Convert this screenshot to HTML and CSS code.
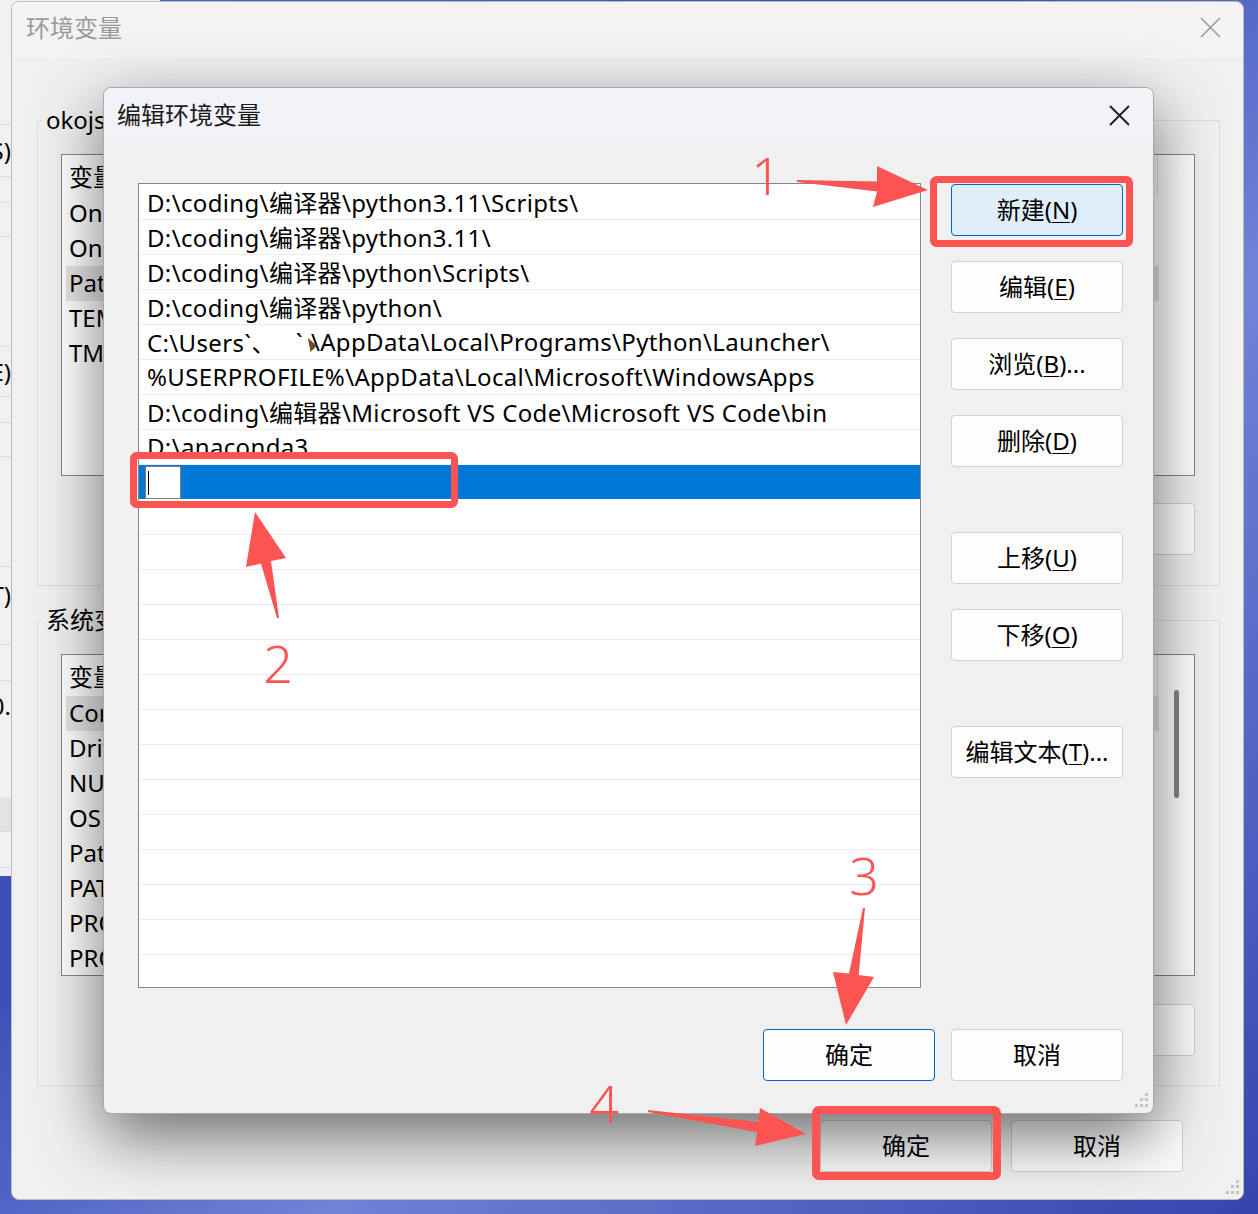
FILE: index.html
```html
<!DOCTYPE html>
<html lang="zh-CN">
<head>
    <meta charset="UTF-8">
    <meta name="viewport" content="width=device-width, initial-scale=1.0">
    <title>编辑环境变量</title>
    <link rel="stylesheet" href="styles.css">
</head>
<body>
    <!-- window behind, only a sliver on the left is visible -->
    <div class="back-win">
        <div class="back-row h125"></div>
        <div class="back-row h52">用户变量(S)</div>
        <div class="back-row h26"></div>
        <div class="back-row h34"></div>
        <div class="back-row h110"></div>
        <div class="back-row h50">高级(E)</div>
        <div class="back-row h26"></div>
        <div class="back-row h34"></div>
        <div class="back-row h110"></div>
        <div class="back-row h56 no-line">环境变量(T)</div>
        <div class="back-row h22"></div>
        <div class="back-row h36"></div>
        <div class="back-row h50 no-line">10.</div>
        <div class="back-row h68"></div>
        <div class="back-row h33 band"></div>
        <div class="back-row h36"></div>
    </div>

    <!-- 环境变量 window -->
    <div class="win win-outer">
        <div class="titlebar">
            <span>环境变量</span>
            <svg class="close-x" width="21" height="21" viewBox="0 0 21 21"><path d="M1 1L20 20M20 1L1 20" stroke="#9a9a9a" stroke-width="1.6"/></svg>
        </div>
        <div class="outer-body">
            <div class="group">
                <div class="group-label">okojs 的用户变量(<u>U</u>)</div>
                <div class="olist">
                    <div class="olist-main">
                        <div class="ohead"><span class="ocol1">变量</span><span class="ocol2">值</span></div>
                        <div class="orow">OneDrive</div>
                        <div class="orow">OneDriveConsumer</div>
                        <div class="orow sel">Path</div>
                        <div class="orow">TEMP</div>
                        <div class="orow">TMP</div>
                    </div>
                </div>
                <div class="obtns">
                    <button class="btn">新建(<u>N</u>)...</button>
                    <button class="btn">编辑(<u>E</u>)...</button>
                    <button class="btn">删除(<u>D</u>)</button>
                </div>
            </div>

            <div class="group group-sys">
                <div class="group-label">系统变量(<u>S</u>)</div>
                <div class="olist">
                    <div class="olist-main">
                        <div class="ohead"><span class="ocol1">变量</span><span class="ocol2">值</span></div>
                        <div class="orow sel">ComSpec</div>
                        <div class="orow">DriverData</div>
                        <div class="orow">NUMBER_OF_PROCESSORS</div>
                        <div class="orow">OS</div>
                        <div class="orow">Path</div>
                        <div class="orow">PATHEXT</div>
                        <div class="orow">PROCESSOR_ARCHITECTURE</div>
                        <div class="orow">PROCESSOR_IDENTIFIER</div>
                    </div>
                    <div class="vscroll"><div class="thumb"></div></div>
                </div>
                <div class="obtns">
                    <button class="btn">新建(<u>W</u>)...</button>
                    <button class="btn">编辑(<u>I</u>)...</button>
                    <button class="btn">删除(<u>L</u>)</button>
                </div>
            </div>
        </div>
        <div class="outer-foot">
            <button class="btn">确定</button>
            <button class="btn">取消</button>
        </div>
        <svg class="grip grip-outer" width="16" height="16" viewBox="0 0 16 16">
            <rect x="12" y="0" width="3" height="3"/><rect x="7" y="5" width="3" height="3"/><rect x="12" y="5" width="3" height="3"/>
            <rect x="2" y="11" width="3" height="3"/><rect x="7" y="11" width="3" height="3"/><rect x="12" y="11" width="3" height="3"/>
        </svg>
    </div>

    <!-- 编辑环境变量 dialog -->
    <div class="win dlg">
        <div class="titlebar dlg-title">
            <span>编辑环境变量</span>
            <svg class="close-x" width="21" height="21" viewBox="0 0 21 21"><path d="M1 1L20 20M20 1L1 20" stroke="#1a1a1a" stroke-width="1.8"/></svg>
        </div>
        <div class="dlg-body">
            <div class="elist">
                <div class="erow">D:\coding\编译器\python3.11\Scripts\</div>
                <div class="erow">D:\coding\编译器\python3.11\</div>
                <div class="erow">D:\coding\编译器\python\Scripts\</div>
                <div class="erow">D:\coding\编译器\python\</div>
                <div class="erow">C:\Users`、<span class="gap"></span>`<span class="smudge"></span>\AppData\Local\Programs\Python\Launcher\</div>
                <div class="erow">%USERPROFILE%\AppData\Local\Microsoft\WindowsApps</div>
                <div class="erow">D:\coding\编辑器\Microsoft VS Code\Microsoft VS Code\bin</div>
                <div class="erow">D:\anaconda3</div>
                <div class="erow editing"><div class="edit-box"><span class="caret"></span></div></div>
                <div class="erow"></div><div class="erow"></div><div class="erow"></div><div class="erow"></div>
                <div class="erow"></div><div class="erow"></div><div class="erow"></div><div class="erow"></div>
                <div class="erow"></div><div class="erow"></div><div class="erow"></div><div class="erow"></div>
                <div class="erow"></div><div class="erow"></div>
            </div>
            <div class="side-btns">
                <button class="btn focus">新建(<u>N</u>)</button>
                <button class="btn">编辑(<u>E</u>)</button>
                <button class="btn">浏览(<u>B</u>)...</button>
                <button class="btn">删除(<u>D</u>)</button>
                <button class="btn push">上移(<u>U</u>)</button>
                <button class="btn">下移(<u>O</u>)</button>
                <button class="btn push">编辑文本(<u>T</u>)...</button>
            </div>
            <div class="dlg-foot">
                <button class="btn primary">确定</button>
                <button class="btn">取消</button>
            </div>
        </div>
        <svg class="grip grip-dlg" width="16" height="16" viewBox="0 0 16 16">
            <rect x="12" y="0" width="3" height="3"/><rect x="7" y="5" width="3" height="3"/><rect x="12" y="5" width="3" height="3"/>
            <rect x="2" y="11" width="3" height="3"/><rect x="7" y="11" width="3" height="3"/><rect x="12" y="11" width="3" height="3"/>
        </svg>
    </div>

    <!-- red annotations drawn over the screenshot -->
    <svg class="marks" width="1258" height="1214" viewBox="0 0 1258 1214">
        <g fill="none" stroke="#fc5353">
            <rect x="933.5" y="179.5" width="196" height="64" rx="3" stroke-width="7"/>
            <rect x="133.5" y="455.5" width="321" height="49" rx="3" stroke-width="7"/>
            <rect x="816" y="1110" width="181" height="66" rx="3" stroke-width="8"/>
        </g>
        <g fill="#fc5353">
            <polygon points="797,180 877,181.5 877,166 928,190 873,207 877,191.5 797,182"/>
            <polygon points="277,618 261,563.5 246,567 255,512 286,558 271,561 279,618"/>
            <polygon points="863,908 849,973.5 833,972 846,1025 874,977 858.7,975 865,908"/>
            <polygon points="648,1110 758.5,1122 760,1108 806,1134 755,1146 757,1132 648,1112"/>
        </g>
        <g class="num">
            <text x="766" y="195">1</text>
            <text x="278" y="683">2</text>
            <text x="864" y="895">3</text>
            <text x="604" y="1123">4</text>
        </g>
    </svg>
</body>
</html>
```

FILE: styles.css
```css
* {
    box-sizing: border-box;
}

html, body {
    margin: 0;
}

body {
    width: 1258px;
    height: 1214px;
    position: relative;
    overflow: hidden;
    background: linear-gradient(135deg, #4a5fc9 0%, #3c4fb9 40%, #7084d8 62%, #3445ad 100%);
    font-family: "Noto Sans", "Noto Sans CJK SC", sans-serif;
    font-size: 24px;
    color: #000;
}

u {
    text-decoration: underline;
    text-underline-offset: 3px;
    text-decoration-thickness: 1px;
}

/* window behind */
.back-win {
    position: absolute;
    left: 0;
    top: 0;
    width: 160px;
    height: 876px;
    background: #f0f0f0;
    display: flex;
    flex-direction: column;
}

.back-row {
    flex: none;
    width: 11px;
    display: flex;
    align-items: center;
    justify-content: flex-end;
    white-space: nowrap;
    border-bottom: 1px solid #dcdcdc;
    line-height: 1;
}

.back-row.no-line { border-bottom: 0; }
.back-row.band { background: #e3e3e3; }

.h22 { height: 22px; }
.h26 { height: 26px; }
.h33 { height: 33px; }
.h34 { height: 34px; }
.h36 { height: 36px; }
.h50 { height: 50px; }
.h52 { height: 52px; }
.h56 { height: 56px; }
.h68 { height: 68px; }
.h110 { height: 110px; }
.h125 { height: 125px; }

/* shared window bits */
.win {
    position: absolute;
    display: flex;
    flex-direction: column;
    border-radius: 8px;
    background: #f0f0f0;
}

.titlebar {
    flex: none;
    display: flex;
    align-items: center;
    justify-content: space-between;
    line-height: 1;
}

.btn {
    width: 172px;
    height: 52px;
    padding: 0;
    border: 1px solid #d0d0d0;
    border-radius: 4px;
    background: #fdfdfd;
    font-family: inherit;
    font-size: 24px;
    color: #000;
    line-height: 1;
}

.btn.primary {
    border-color: #0067c0;
}

.btn.focus {
    background: #e0eef9;
    border-color: #0067c0;
}

.grip {
    position: absolute;
    fill: #c4c4c4;
}

/* 环境变量 */
.win-outer {
    left: 11px;
    top: 1px;
    width: 1233px;
    height: 1199px;
    border: 1px solid #bcbcbc;
}

.win-outer .titlebar {
    height: 56px;
    padding: 0 22px 5px 14px;
    background: #f3f3f3;
    color: #9a9a9a;
    border-radius: 8px 8px 0 0;
}

.outer-body {
    padding: 62px 23px 0 25px;
}

.group {
    border: 1px solid #dcdcdc;
    padding: 0 24px 30px 23px;
}

.group-sys {
    margin-top: 34px;
    padding-bottom: 29px;
}

.group-label {
    width: max-content;
    height: 34px;
    line-height: 34px;
    margin: -18px 0 0 -19px;
    padding: 0 4px;
    background: #f0f0f0;
}

.olist {
    height: 322px;
    margin-top: 17px;
    display: flex;
    background: #fff;
    border: 1px solid #828790;
    overflow: hidden;
}

.olist-main {
    flex: 1;
    min-width: 0;
}

.ohead {
    height: 41px;
    display: flex;
    align-items: center;
}

.ocol1 {
    width: 288px;
    padding-left: 7px;
    height: 100%;
    display: flex;
    align-items: center;
    border-right: 1px solid #e5e5e5;
}

.ocol2 {
    width: 808px;
    padding-left: 8px;
    height: 100%;
    display: flex;
    align-items: center;
    border-right: 1px solid #e5e5e5;
}

.orow {
    width: 1093px;
    height: 35px;
    margin-left: 4px;
    padding: 0 0 2px 3px;
    display: flex;
    align-items: center;
    white-space: nowrap;
}

.orow.sel {
    background: #e5e5e5;
}

.vscroll {
    flex: none;
    width: 28px;
    padding: 35px 0 0 8px;
}

.thumb {
    width: 5px;
    height: 108px;
    border-radius: 3px;
    background: #858585;
}

.obtns {
    margin-top: 27px;
    display: flex;
    justify-content: flex-end;
    gap: 19px;
}

.group-sys .obtns {
    margin-top: 28px;
}

.outer-foot {
    margin-top: 34px;
    padding-right: 60px;
    display: flex;
    justify-content: flex-end;
    gap: 19px;
}

.grip-outer {
    right: 3px;
    bottom: 3px;
}

/* 编辑环境变量 */
.dlg {
    left: 103px;
    top: 87px;
    width: 1051px;
    height: 1027px;
    border: 1px solid #a9a9a9;
    box-shadow: 0 22px 64px rgba(0, 0, 0, 0.55);
}

.dlg-title {
    height: 55px;
    padding: 0 23px 1px 13px;
    background: #f2f3f9;
    color: #1a1a1a;
    border-radius: 8px 8px 0 0;
}

.dlg-title .close-x {
    margin-top: 1px;
}

.dlg-body {
    flex: 1;
    display: grid;
    grid-template-columns: 783px 172px;
    grid-template-rows: 805px 52px;
    column-gap: 30px;
    row-gap: 41px;
    padding: 40px 30px 32px 34px;
}

.elist {
    background: #fff;
    border: 1px solid #828790;
    padding-top: 1px;
    overflow: hidden;
}

.erow {
    height: 35px;
    padding: 0 0 2px 8px;
    border-bottom: 1px solid #ededed;
    display: flex;
    align-items: center;
    white-space: nowrap;
    overflow: hidden;
    letter-spacing: 0.35px;
}

.erow .gap {
    display: inline-block;
    width: 20px;
}

.erow .smudge {
    display: inline-block;
    width: 9px;
    height: 14px;
    margin: 8px -6px 0 5px;
    background: #6e4d2c;
    clip-path: polygon(0 0, 100% 55%, 30% 100%);
}

.erow.editing {
    padding: 0 0 0 6px;
    background: #0078d7;
    border-bottom-color: #fff;
}

.edit-box {
    width: 36px;
    height: 33px;
    background: #fff;
    border: 1px solid #7a7a7a;
    padding: 4px 0 0 2px;
}

.caret {
    display: block;
    width: 1px;
    height: 24px;
    background: #000;
}

.side-btns {
    padding-top: 1px;
    display: flex;
    flex-direction: column;
    gap: 25px;
}

.side-btns .push {
    margin-top: 40px;
}

.dlg-foot {
    grid-column: 1 / 3;
    display: flex;
    justify-content: flex-end;
    gap: 16px;
}

.grip-dlg {
    right: 4px;
    bottom: 4px;
}

/* annotations */
.marks {
    position: absolute;
    left: 0;
    top: 0;
    pointer-events: none;
}

.num text {
    font-family: "Noto Sans", sans-serif;
    font-weight: 300;
    font-size: 52px;
    fill: #fc5353;
    text-anchor: middle;
}
```
